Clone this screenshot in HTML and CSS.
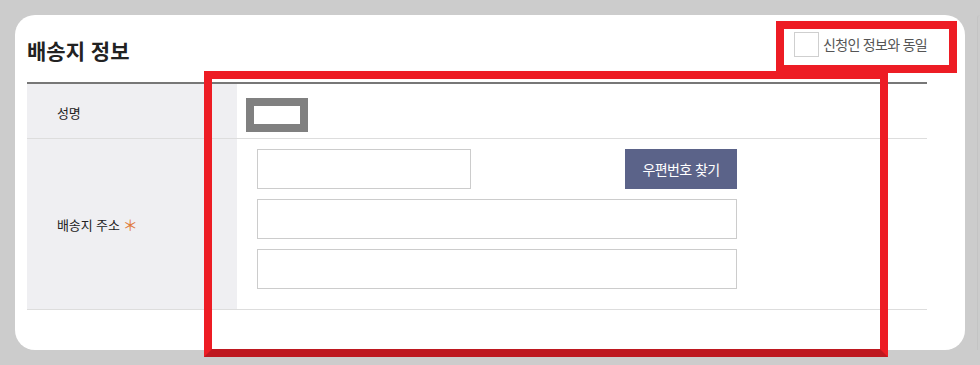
FILE: index.html
```html
<!DOCTYPE html>
<html lang="ko">
<head>
<meta charset="utf-8">
<title>배송지 정보</title>
<link rel="stylesheet" href="styles.css">
</head>
<body>
<div class="stage">
  <section class="card">
    <header class="card-head">
      <h2 class="title">배송지 정보</h2>
      <label class="same">
        <input type="checkbox" class="same-box">
        <span class="same-text">신청인 정보와 동일</span>
      </label>
    </header>
    <div class="form">
      <div class="row row-name">
        <div class="label">성명</div>
        <div class="value value-name">
          <div class="name-box"></div>
        </div>
      </div>
      <div class="row row-addr">
        <div class="label">배송지 주소 <span class="req">＊</span></div>
        <div class="value value-addr">
          <div class="zip-line">
            <input type="text" class="field field-zip">
            <button type="button" class="zip-btn">우편번호 찾기</button>
          </div>
          <input type="text" class="field field-wide">
          <input type="text" class="field field-wide">
        </div>
      </div>
    </div>
  </section>
  <div class="card-next"></div>
</div>
<div class="mark mark-top"></div>
<div class="mark mark-main"></div>
</body>
</html>
```
FILE: styles.css
```css
html, body {
  margin: 0;
  padding: 0;
  overflow: hidden;
  background: #cccccc;
  font-family: "Noto Sans CJK KR", "Noto Sans", sans-serif;
  color: #222;
}
.stage {
  display: flex;
  gap: 12px;
  padding: 15px 0 15px 15px;
  width: 980px;
  box-sizing: border-box;
  overflow: hidden;
}
.card {
  flex: none;
  width: 950px;
  height: 335px;
  box-sizing: border-box;
  background: #fff;
  border-radius: 20px;
  padding: 0 38px 0 12px;
}
.card-next {
  flex: 1;
  min-width: 0;
  height: 335px;
  box-sizing: border-box;
  border-left: 1px solid #c4c4c4;
  border-top: 1px solid #c9c9c9;
  border-radius: 14px 0 0 0;
  background: #cccccc;
}
.card-head {
  height: 67px;
  display: flex;
  justify-content: space-between;
  align-items: flex-start;
}
.title {
  margin: 25px 0 0;
  font-size: 21px;
  line-height: 21px;
  font-weight: 700;
  color: #222;
}
.same {
  margin-top: 17px;
  display: flex;
  align-items: center;
  gap: 4px;
}
.same-box {
  appearance: none;
  -webkit-appearance: none;
  margin: 0;
  width: 25px;
  height: 25px;
  box-sizing: border-box;
  border: 1px solid #cfcfcf;
  background: #fff;
}
.same-text {
  font-size: 14px;
  letter-spacing: -0.7px;
  color: #555;
  line-height: 25px;
}
.form {
  border-top: 2px solid #777;
}
.row {
  display: flex;
  border-bottom: 1px solid #dddddd;
}
.label {
  flex: none;
  width: 210px;
  box-sizing: border-box;
  padding-left: 30px;
  background: #efeff2;
  display: flex;
  align-items: center;
  font-size: 13px;
  letter-spacing: -0.1px;
  color: #222;
}
.row-name .label {
  height: 54px;
  padding-top: 2px;
  box-sizing: border-box;
}
.req {
  color: #e07b3c;
  font-size: 15px;
  margin-left: 3px;
}
.value-name {
  padding: 14px 0 0 9px;
}
.name-box {
  width: 62px;
  height: 34px;
  box-sizing: border-box;
  border: 8px solid #808080;
  background: #fff;
}
.value-addr {
  padding: 10px 0 20px 20px;
  display: flex;
  flex-direction: column;
  gap: 10px;
}
.zip-line {
  display: flex;
  justify-content: space-between;
  width: 480px;
}
.field {
  display: block;
  margin: 0;
  height: 40px;
  box-sizing: border-box;
  border: 1px solid #cccccc;
  background: #fff;
  padding: 0 10px;
}
.field-zip {
  width: 214px;
}
.field-wide {
  width: 480px;
}
.zip-btn {
  width: 112px;
  height: 40px;
  border: 0;
  margin: 0;
  padding: 0;
  background: #5b6389;
  color: #fff;
  font-family: "Noto Sans CJK KR", "Noto Sans", sans-serif;
  font-size: 14px;
  letter-spacing: -0.6px;
}
.mark {
  position: absolute;
  box-sizing: border-box;
  border: 8px solid #ed1c24;
  pointer-events: none;
}
.mark-top {
  left: 776px;
  top: 21px;
  width: 181px;
  height: 52px;
}
.mark-main {
  left: 204px;
  top: 71px;
  width: 684px;
  height: 286px;
  border-bottom-color: #be1820;
}
```
